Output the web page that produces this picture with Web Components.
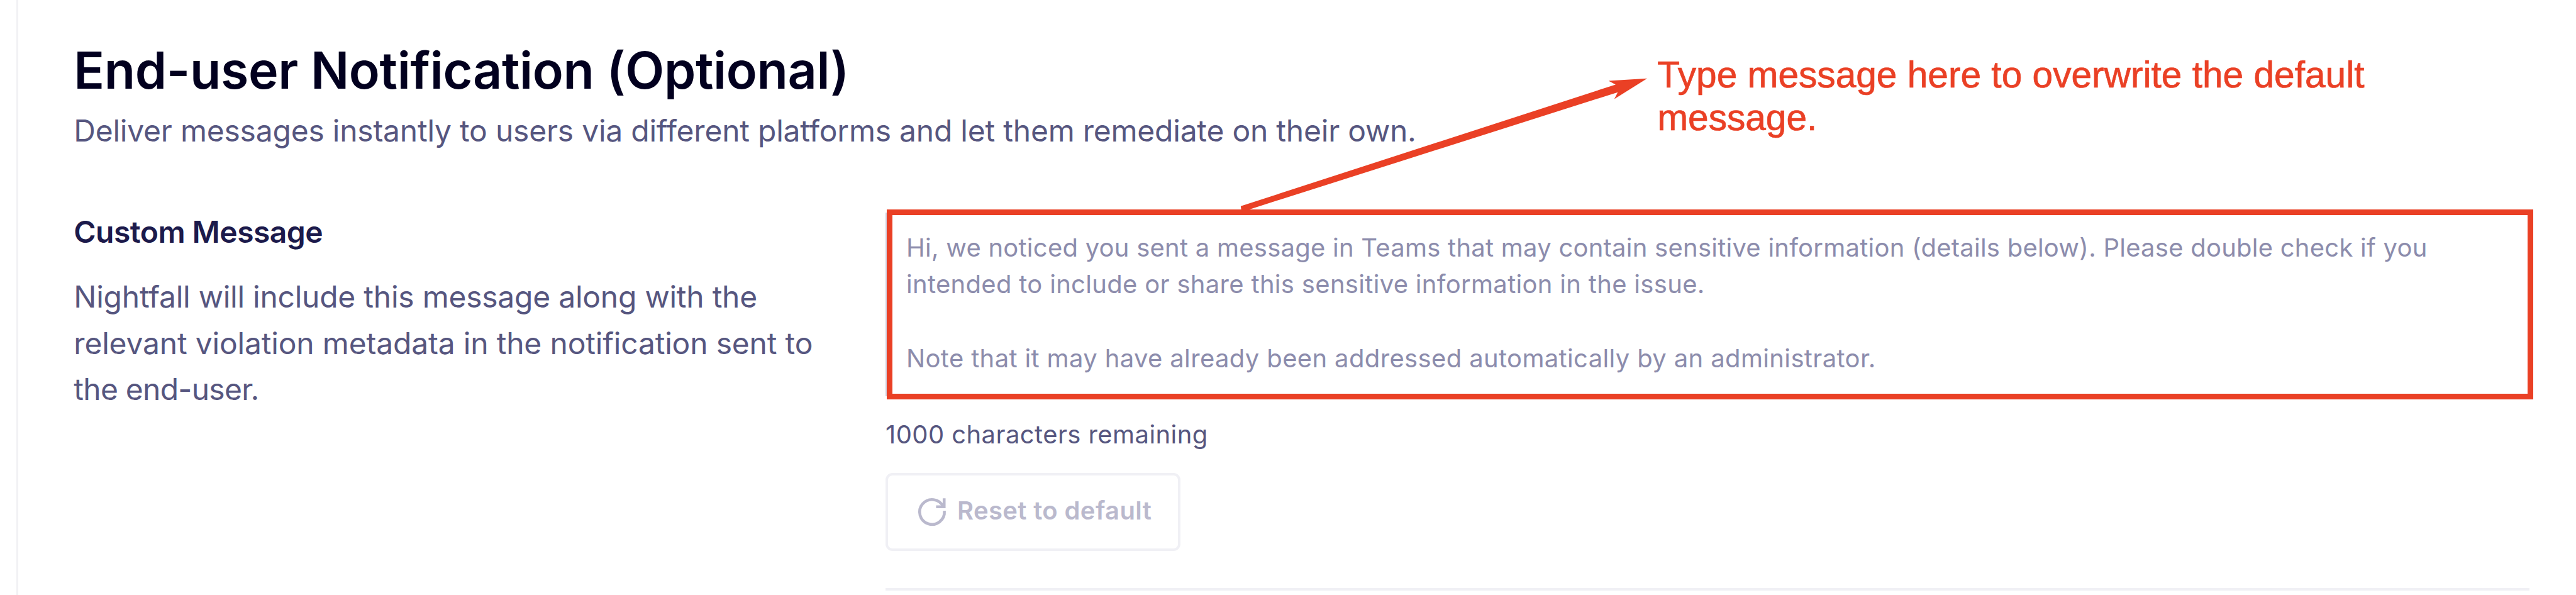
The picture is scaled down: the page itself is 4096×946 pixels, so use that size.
<!DOCTYPE html>
<html lang="en">
<head>
<meta charset="utf-8">
<title>End-user Notification</title>
<style>
  html, body { margin: 0; background: #fff; }
  body { width: 4096px; height: 946px; overflow: hidden; font-family: Inter, "Liberation Sans", sans-serif; }
</style>
</head>
<body>
<notification-page>
  <section-heading slot="heading">
    <span slot="title">End-user Notification (Optional)</span>
    <span slot="subtitle">Deliver messages instantly to users via different platforms and let them remediate on their own.</span>
  </section-heading>
  <field-label slot="label">
    <span slot="name">Custom Message</span>
    <text-line style="--track:-.25px">Nightfall will include this message along with the</text-line>
    <text-line style="--track:-.19px">relevant violation metadata in the notification sent to</text-line>
    <text-line style="--track:-.75px">the end-user.</text-line>
  </field-label>
  <message-box slot="field">
    <text-line style="--track:.24px">Hi, we noticed you sent a message in Teams that may contain sensitive information (details below). Please double check if you</text-line>
    <text-line style="--track:.31px">intended to include or share this sensitive information in the issue.</text-line>
    <text-line></text-line>
    <text-line style="--track:.36px">Note that it may have already been addressed automatically by an administrator.</text-line>
  </message-box>
  <char-counter slot="field">1000 characters remaining</char-counter>
  <reset-button slot="field">Reset to default</reset-button>
  <callout-arrow slot="overlay"></callout-arrow>
  <callout-note slot="overlay">
    <text-line>Type message here to overwrite the default</text-line>
    <text-line>message.</text-line>
  </callout-note>
</notification-page>
<script>
const define = (name, html) => customElements.define(name, class extends HTMLElement {
  constructor() {
    super();
    const t = document.createElement('template');
    t.innerHTML = html;
    this.attachShadow({ mode: 'open' }).append(t.content.cloneNode(true));
  }
});

define('text-line', `
  <style>:host { display: block; white-space: nowrap; min-height: 1lh; letter-spacing: var(--track, 0); }</style>
  <slot></slot>`);

define('notification-page', `
  <style>
    :host { display: block; position: relative; box-sizing: border-box; height: 946px; padding-left: 26px; }
    .panel { box-sizing: border-box; height: 100%; border-left: 3px solid #f1f1f4; padding: 63.8px 0 0 88.3px; }
    .row { display: grid; grid-template-columns: 1290.7px 2614.5px; margin-top: 92.7px; }
    .field { display: flex; flex-direction: column; align-items: flex-start; }
    hr { width: 100%; height: 4px; margin: 59px 0 0; border: 0; background: #f0f0f5; }
  </style>
  <div class="panel">
    <slot name="heading"></slot>
    <div class="row">
      <slot name="label"></slot>
      <div class="field"><slot name="field"></slot><hr></div>
    </div>
  </div>
  <slot name="overlay"></slot>`);

define('section-heading', `
  <style>
    :host { display: flex; flex-direction: column; gap: 16.5px; white-space: nowrap; }
    .t { margin: 0; font-size: 80.7px; line-height: 96px; font-weight: 600; letter-spacing: -.37px; color: #02001f; }
    .s { margin: 0; font-size: 48px; line-height: 64px; letter-spacing: -.23px; color: #56567f; }
  </style>
  <h1 class="t"><slot name="title"></slot></h1>
  <p class="s"><slot name="subtitle"></slot></p>`);

define('field-label', `
  <style>
    :host { display: block; padding-top: 4.1px; font-size: 48px; line-height: 73.34px; color: #56567f; }
    .n { margin: 0 0 34.1px; font-size: 48px; line-height: 64px; font-weight: 600; letter-spacing: -.55px; color: #1c1a4b; }
  </style>
  <h2 class="n"><slot name="name"></slot></h2>
  <slot></slot>`);

define('message-box', `
  <style>
    :host { display: block; box-sizing: border-box; width: 2618px; height: 302px; margin-left: 2px; padding: 22.7px 22px 0;
      border: 9px solid #ea4025; box-shadow: -7px 0 0 -5px #cfcfdf; font-size: 40px; line-height: 58.67px; color: #8c8cac; }
  </style>
  <slot></slot>`);

define('char-counter', `
  <style>:host { display: block; margin-top: 32px; font-size: 40px; line-height: 48px; letter-spacing: .41px; white-space: nowrap; color: #56567f; }</style>
  <slot></slot>`);

define('reset-button', `
  <style>
    :host { display: block; margin-top: 37px; }
    button { all: unset; display: flex; align-items: center; gap: 17.5px; box-sizing: border-box; width: 469.5px; height: 124px;
      padding-left: 48.5px; border: 4px solid #f0f0f5; border-radius: 11px; color: #bab9cd; }
    svg { display: block; width: 44px; height: 44px; overflow: visible; }
    span { padding-bottom: 4px; font-size: 40px; line-height: 48px; font-weight: 600; letter-spacing: .37px; white-space: nowrap; }
  </style>
  <button>
    <svg viewBox="0 0 48 48" fill="none" stroke="currentColor" stroke-width="5">
      <path d="M45.4 22A21.5 21.5 0 1 1 43.3 14.5"/>
      <path d="M45 .4V15H31"/>
    </svg>
    <span><slot></slot></span>
  </button>`);

define('callout-arrow', `
  <style>
    :host { position: absolute; inset: 0; pointer-events: none; }
    svg { display: block; width: 4096px; height: 946px; }
  </style>
  <svg viewBox="0 0 4468 1032"><path fill="#ea4025" d="M2152 357.5 2802.3 146.7 2790 140.3 2857 136 2800 171.7 2806 160 2153.5 367.5Z"/></svg>`);

define('callout-note', `
  <style>
    :host { position: absolute; left: 2635.2px; top: 85.1px; font-family: "Liberation Sans", Arial, sans-serif;
      font-size: 58.64px; line-height: 67.8px; color: #ea4025; -webkit-text-stroke: .7px #ea4025; }
  </style>
  <slot></slot>`);
</script>
</body>
</html>
